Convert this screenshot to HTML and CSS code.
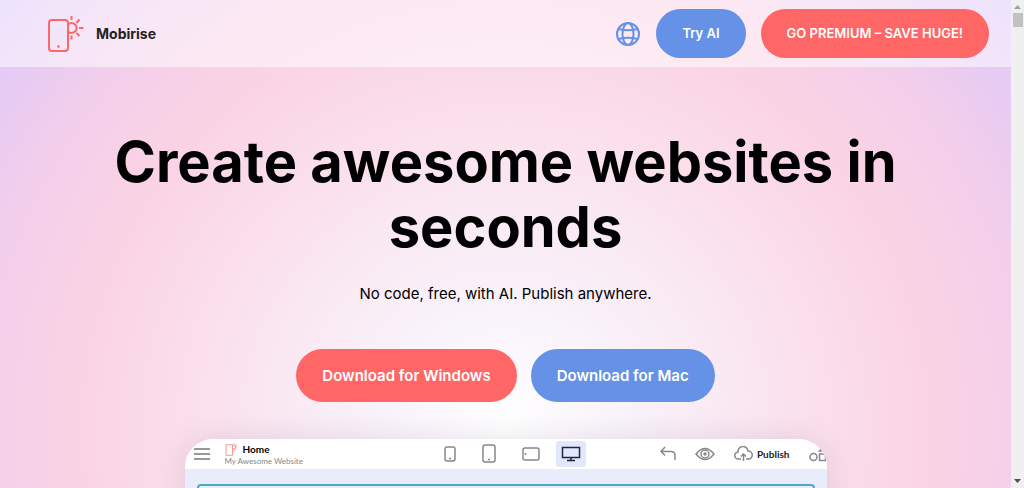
FILE: index.html
```html
<!DOCTYPE html>
<html lang="en">
<head>
    <meta charset="UTF-8">
    <meta name="viewport" content="width=device-width, initial-scale=1.0">
    <title>Mobirise</title>
    <link rel="stylesheet" href="styles.css">
</head>
<body>
    <div class="page">
        <header class="navbar">
            <a class="brand" href="#">
                <svg class="brand-logo" viewBox="0 0 36 38" fill="none" stroke="#ff6666" stroke-width="2">
                    <rect x="1" y="5" width="19" height="31" rx="3"/>
                    <path d="M20 9.500a5 5 0 1 1 0 7"/>
                    <path d="M23.500 1v4M23.500 20.500v4M31 13h4.500M28.500 8l3-3.500M28.500 18l3 3"/>
                    <circle cx="10.500" cy="31.500" r="1.300" fill="#ff6666" stroke="none"/>
                </svg>
                <span>Mobirise</span>
            </a>
            <nav class="nav-actions">
                <a class="language" href="#" aria-label="Language">
                    <svg viewBox="0 0 26 26" fill="none" stroke="#6592e6" stroke-width="2">
                        <circle cx="13" cy="13" r="11"/>
                        <ellipse cx="13" cy="13" rx="5.500" ry="11"/>
                        <path d="M3.500 8q9.500 2.500 19 0M3.500 18q9.500-2.500 19 0"/>
                    </svg>
                </a>
                <a class="btn btn-blue" href="#">Try AI</a>
                <a class="btn btn-red" href="#">GO PREMIUM – SAVE HUGE!</a>
            </nav>
        </header>

        <main class="hero">
            <h1>Create awesome websites in seconds</h1>
            <p>No code, free, with AI. Publish anywhere.</p>
            <div class="downloads">
                <a class="btn btn-large btn-red" href="#">Download for Windows</a>
                <a class="btn btn-large btn-blue" href="#">Download for Mac</a>
            </div>

            <section class="app">
                <div class="toolbar">
                    <button class="tool menu" aria-label="Menu">
                        <svg width="16" height="14" viewBox="0 0 16 14"><path d="M0 2h16M0 7h16M0 12h16"/></svg>
                    </button>
                    <div class="site">
                        <div class="site-name">
                            <svg width="13" height="13" viewBox="0 0 36 38" fill="none" stroke="#f09a92" stroke-width="3">
                                <rect x="2" y="5" width="19" height="31" rx="2"/>
                                <circle cx="25" cy="12" r="5"/>
                                <path d="M25 1v4M25 20v4M32 12h4M30 7l3-3M30 18l3 3"/>
                            </svg>
                            <span>Home</span>
                        </div>
                        <small>My Awesome Website</small>
                    </div>
                    <div class="devices">
                        <button class="tool" aria-label="Phone">
                            <svg width="12" height="18" viewBox="0 0 12 18"><rect x="1" y="2" width="10" height="14" rx="2"/><path d="M5 13.500h2"/></svg>
                        </button>
                        <button class="tool" aria-label="Tablet">
                            <svg width="14" height="20" viewBox="0 0 14 20"><rect x="1" y="1" width="12" height="17" rx="2"/><path d="M6 15.500h2"/></svg>
                        </button>
                        <button class="tool" aria-label="Tablet landscape">
                            <svg width="18" height="16" viewBox="0 0 18 16"><rect x="1" y="2" width="16" height="12" rx="2"/><path d="M3.500 7v2"/></svg>
                        </button>
                        <button class="tool active" aria-label="Desktop">
                            <svg width="20" height="16" viewBox="0 0 20 16"><path d="M1.500 1.500h17v10h-17zM10 12v2.500M6 14.500h8"/></svg>
                        </button>
                    </div>
                    <div class="actions">
                        <button class="tool" aria-label="Undo">
                            <svg width="16" height="16" viewBox="0 0 16 16"><path d="M5 1L1 5.500l4 4M1 5.500h10q4 0 4 4V14"/></svg>
                        </button>
                        <button class="tool" aria-label="Preview">
                            <svg width="20" height="14" viewBox="0 0 20 14"><path d="M1 7q9-11 18 0q-9 11-18 0z"/><circle cx="10" cy="7" r="4"/><circle cx="10" cy="7" r="1"/></svg>
                        </button>
                        <button class="tool publish">
                            <svg width="19" height="16" viewBox="0 0 19 16"><path d="M7 13H4.500A3.500 3.500 0 0 1 4 6a5 5 0 0 1 10-1A4 4 0 0 1 14.500 13H12M9.500 15V8M7 10.500L9.500 8l2.500 2.500"/></svg>
                            <span>Publish</span>
                        </button>
                        <button class="tool" aria-label="Blocks">
                            <svg width="18" height="16" viewBox="0 0 18 16"><circle cx="4.500" cy="11" r="3.500"/><path d="M10.500 8h6v6.500h-6zM10.500 5l3-4 3 4z"/></svg>
                        </button>
                    </div>
                </div>
                <div class="canvas">
                    <div class="block"></div>
                </div>
            </section>
        </main>
    </div>

    <div class="scrollbar">
        <svg width="7" height="4" viewBox="0 0 7 4"><path d="M0 4L3.500 0 7 4z" fill="#a0a0a0"/></svg>
        <div class="thumb"></div>
        <svg class="down" width="7" height="4" viewBox="0 0 7 4"><path d="M0 0L3.500 4 7 0z" fill="#505050"/></svg>
    </div>
</body>
</html>
```

FILE: styles.css
```css
* {
    box-sizing: border-box;
}

body {
    display: flex;
    height: 100vh;
    margin: 0;
    overflow: hidden;
    font-family: Inter, sans-serif;
    color: #000;
}

a {
    text-decoration: none;
}

svg {
    display: block;
}

.page {
    flex: 1;
    overflow: hidden;
    background: radial-gradient(circle at 50% 430px, #fff 0, #f9f3fb 120px, #fae2ed 290px, #fad3e4 430px, #f4cfea 520px, #e4caf5 620px, #cfc2fa 690px);
}

.navbar {
    display: flex;
    align-items: center;
    justify-content: space-between;
    padding: 9px 22px 9px 48px;
    background-color: rgba(255, 255, 255, 0.5);
}

.brand {
    display: flex;
    align-items: center;
    gap: 12px;
    color: #232323;
    font-size: 14px;
    font-weight: 700;
}

.brand-logo {
    width: 36px;
    height: 38px;
}

.nav-actions {
    display: flex;
    align-items: center;
    gap: 15px;
}

.language svg {
    width: 26px;
    height: 26px;
}

.btn {
    padding: 16px 26px;
    border-radius: 40px;
    color: #fff;
    font-size: 13px;
    font-weight: 600;
    line-height: 17px;
}

.btn-large {
    font-size: 15px;
    line-height: 21px;
}

.btn-red {
    background-color: #ff6666;
}

.btn-blue {
    background-color: #6592e6;
}

.hero {
    display: flex;
    flex-direction: column;
    align-items: center;
    padding: 63px 24px 0;
    text-align: center;
}

h1 {
    max-width: 860px;
    margin: 0;
    font-size: 56px;
    font-weight: 700;
    line-height: 65px;
}

.hero p {
    margin: 22px 0 43px;
    font-size: 15px;
    line-height: 24px;
}

.downloads {
    display: flex;
    gap: 14px;
}

.app {
    width: 100%;
    max-width: 642px;
    height: 400px;
    margin-top: 37px;
    overflow: hidden;
    border-radius: 28px;
    background-color: #e9edfb;
    box-shadow: 0 0 30px rgba(60, 30, 70, 0.12);
}

.toolbar {
    display: flex;
    align-items: center;
    height: 30px;
    padding-left: 9px;
    background-color: #fff;
    font-family: Lato, sans-serif;
}

.tool {
    padding: 0;
    border: none;
    background: none;
    font-family: inherit;
}

.tool svg {
    fill: none;
    stroke: #888;
    stroke-width: 1.5;
}

.menu svg {
    stroke: #999;
    stroke-width: 2;
}

.site {
    margin-left: 15px;
    text-align: left;
}

.site-name {
    display: flex;
    align-items: center;
    gap: 5px;
    font-size: 10px;
    font-weight: 700;
    line-height: 12px;
}

.site small {
    display: block;
    color: #888;
    font-size: 8px;
    line-height: 10px;
}

.devices {
    display: flex;
    align-items: center;
    gap: 26px;
    margin-left: auto;
    margin-right: 74px;
}

.devices .active {
    margin-left: -10px;
    padding: 5px;
    border-radius: 3px;
    background-color: #e2e7fb;
}

.devices .active svg {
    stroke: #22253d;
}

.actions {
    display: flex;
    align-items: center;
    gap: 19px;
}

.publish {
    display: flex;
    align-items: center;
    gap: 4px;
    color: #222;
    font-size: 10px;
    font-weight: 700;
}

.canvas {
    padding: 15px 12px 0;
}

.block {
    height: 300px;
    border: 2px solid #4eaac4;
    border-radius: 4px;
    background-color: #e1f1fa;
}

.scrollbar {
    display: flex;
    flex-direction: column;
    align-items: center;
    width: 13px;
    padding: 5px 0;
    background-color: #f0f0f0;
}

.thumb {
    width: 10px;
    height: 14px;
    margin-top: 4px;
    background-color: #c1c1c1;
}

.down {
    margin-top: auto;
}
```
